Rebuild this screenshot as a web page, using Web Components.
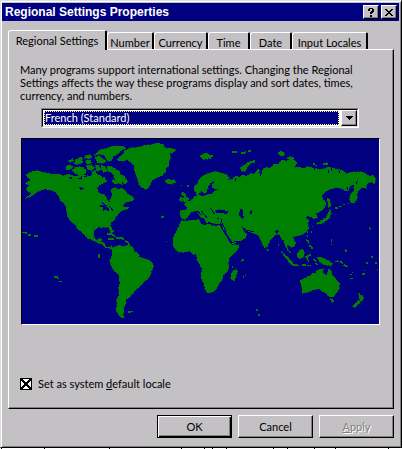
<!DOCTYPE html>
<html lang="en"><head><meta charset="utf-8"><title>Regional Settings Properties</title>
<style>
html{height:100%}
body{margin:0;min-height:100%;background:#fff;font:11px/13px Lato,"Liberation Sans",Arial,sans-serif;color:#000}
</style></head><body>
<settings-page></settings-page>
<script>
function define(name,html,setup){
  customElements.define(name,class extends HTMLElement{
    constructor(){
      super();
      const t=document.createElement('template');
      t.innerHTML='<style>*{box-sizing:border-box}:host{display:block;box-sizing:border-box}</style>'+html;
      this.attachShadow({mode:'open'}).append(t.content.cloneNode(true));
    }
    connectedCallback(){ if(setup) setup(this,this.shadowRoot); }
  });
}

define('title-bar',`<style>
:host{display:flex;align-items:center;height:18px;background:#000080;color:#fff;padding:0 2px 0 3px}
h1{flex:1;margin:0;font:bold 12px/16px "Liberation Sans",Arial,sans-serif}
div{display:flex;gap:2px}
button{width:16px;height:14px;padding:0;border:1px solid;border-color:#fff #000 #000 #fff;background:#c3c1c3;box-shadow:inset -1px -1px #808080;display:grid;place-items:center}
svg{display:block}
</style><h1><slot></slot></h1><div>
<button aria-label="Help"><svg width="8" height="10" shape-rendering="crispEdges"><path d="M2 1h4v1h1v3h-1v1h-1v1h-2v-2h1v-1h1v-2h-2v2h-2v-2h1zM3 8h2v2h-2z"/></svg></button>
<button aria-label="Close"><svg width="8" height="8" shape-rendering="crispEdges"><path d="M0 1h2v1h1v1h2v-1h1v-1h2v1h-1v1h-1v1h-1v1h1v1h1v1h1v1h-2v-1h-1v-1h-2v1h-1v1h-2v-1h1v-1h1v-1h1v-1h-1v-1h-1v-1h-1z"/></svg></button></div>`);

define('tab-item',`<style>
:host{flex:0 1 auto;min-width:0;position:relative;margin-top:2px;height:17px}
button{width:100%;height:100%;font:inherit;color:inherit;background:#c3c1c3;border:1px solid #fff;border-right:2px solid #000;border-bottom:0;border-radius:3px 2px 0 0;padding:2px 0 0;white-space:nowrap;display:block}
:host([selected]){margin-top:0;height:20px;z-index:1}
:host([selected]) button{padding-bottom:3px}
</style><button role="tab"><slot></slot></button>`,(h,r)=>{
 r.querySelector('button').setAttribute('aria-selected',h.hasAttribute('selected'));
 h.style.flexBasis=h.getAttribute('basis');
});

define('tab-strip',`<style>:host{display:flex;height:19px}</style><slot></slot>`);

define('locale-select',`<style>
:host{display:grid;grid-template-columns:1fr;height:20px;border:1px solid;border-color:#808080 #fff #fff #808080;background:#fff}
.in{position:relative;border:1px solid;border-color:#000 #dfdfdf #dfdfdf #000;display:flex;padding:1px}
select{appearance:none;width:100%;height:14px;min-width:0;margin-right:17px;padding:0;border:1px dotted #ffff7f;background:#000080;color:#fff;font:inherit;line-height:12px;border-radius:0;outline:0}
.arrow{position:absolute;right:0;top:0;bottom:0;width:16px;background:#c3c1c3;border:1px solid;border-color:#fff #000 #000 #fff;box-shadow:inset -1px -1px #808080;display:grid;place-items:center;pointer-events:none}
</style><div class="in"><select aria-label="Locale"><option>French (Standard)</option></select><span class="arrow"><svg width="7" height="4" shape-rendering="crispEdges"><path d="M0 0h7v1h-1v1h-1v1h-1v1h-1v-1h-1v-1h-1v-1h-1z"/></svg></span></div>`);

define('world-map',`<style>
:host{border:1px solid;border-color:#000 #fff #fff #000;outline:1px solid #c3c1c3;background:#000080}
svg{display:block;width:100%;height:auto}
.land{fill:#008000;stroke:#008000;stroke-width:2;stroke-dasharray:5 8 3 6 9 5}
.water{fill:#000080}
.isles{fill:none;stroke:#008000;stroke-width:5}
.inlets{fill:none;stroke:#000080;stroke-width:3}
</style><svg viewBox="21 15 1071 555" shape-rendering="crispEdges" role="img" aria-label="World map">
<g class="land">
<path d="M32 125L40 118 48 113 70 110 80 115 95 116 112 121 130 120 145 125 160 120 180 126 197 122 215 125 228 127 233 112 240 108 246 120 255 125 270 130 275 143 262 150 247 158 248 172 258 180 270 182 278 199 284 204 286 195 292 184 288 166 300 160 312 166 318 162 329 168 338 180 355 190 357 198 345 203 334 204 323 212 327 219 341 220 340 226 327 227 315 235 311 241 301 248 299 257 289 265 286 275 293 290 292 299 286 294 280 281 270 279 261 281 250 280 239 288 235 299 238 311 244 320 253 313 262 315 259 323 268 328 273 338 285 339 290 335 290 344 281 343 271 341 260 330 247 326 233 319 217 312 205 300 198 292 188 285 180 272 162 258 155 236 153 217 147 208 135 199 132 187 121 174 108 168 90 166 78 169 65 175 57 181 45 189 29 193 43 184 49 176 37 172 35 161 45 153 31 150 36 143 45 141 43 134Z"/>
<path d="M236 64L255 48 278 42 292 36 325 36 333 43 320 49 308 61 295 66 292 77 282 83 274 75 266 64 252 60Z"/>
<path d="M276 96L291 98 303 106 312 112 318 122 329 127 338 143 331 151 322 145 322 155 312 148 299 150 290 140 300 136 295 123 286 112 279 115Z"/>
<path d="M178 101L200 98 214 108 211 120 197 124 180 119 172 109ZM154 97L166 92 174 98 167 106 154 109ZM215 94L229 92 239 101 230 110 218 106ZM160 80L172 74 178 79 164 86ZM181 77L200 69 204 86 188 92 178 87ZM210 65L224 61 232 70 222 75 208 72ZM212 79L226 77 229 88 213 90ZM239 70L253 64 261 74 273 79 270 88 247 86ZM241 94L252 92 256 107 246 112ZM258 93L269 97 276 110 266 117 258 106Z"/>
<path d="M305 79L315 67 324 61 330 49 345 42 365 41 390 34 410 32 430 27 444 31 453 44 466 42 482 47 476 55 465 59 467 72 461 83 463 95 452 103 452 115 440 126 424 131 412 139 406 150 397 167 389 165 379 160 371 148 367 133 362 120 357 106 359 95 349 87 338 78 320 81Z"/>
<path d="M450 141L460 135 470 139 478 136 482 144 471 151 456 148Z"/>
<path d="M289 343L304 336 312 333 322 338 339 334 352 339 359 351 370 359 374 369 390 374 403 379 415 390 416 399 409 411 407 423 400 434 389 440 381 451 373 460 362 466 355 479 345 488 333 497 334 507 325 522 327 533 323 541 329 552 319 551 311 543 303 528 306 510 305 498 312 482 311 464 314 448 312 423 299 413 289 395 284 380 291 367 292 353Z"/>
<path d="M496 230L512 228 517 220 508 212 515 205 528 199 536 190 545 185 544 176 550 169 552 184 565 187 579 181 592 179 600 171 613 165 596 166 590 154 600 140 589 145 579 158 580 170 570 179 560 172 553 177 537 172 537 157 547 151 550 140 564 126 581 118 598 112 616 116 633 121 645 132 636 139 653 136 659 127 676 128 683 122 693 126 708 119 717 121 724 111 731 103 735 128 741 119 743 106 755 100 768 102 775 91 792 90 800 78 815 80 829 75 838 78 847 86 837 101 850 98 866 103 879 98 893 101 914 107 929 104 937 99 955 102 971 106 986 112 994 119 1014 114 1033 113 1045 115 1054 121 1064 126 1075 124 1082 135 1079 150 1069 144 1055 150 1054 164 1042 160 1033 167 1026 178 1027 194 1018 207 1007 206 1003 196 1008 179 1018 169 1015 151 1005 156 1001 169 991 171 980 164 963 160 947 166 934 171 920 184 923 195 933 205 930 219 920 230 909 236 902 239 908 251 897 255 888 249 877 246 870 252 884 258 879 268 881 283 872 295 858 303 845 306 834 308 838 319 843 329 835 339 827 340 819 332 815 336 821 349 829 358 821 353 810 334 806 319 798 314 794 302 786 300 777 306 768 315 763 323 757 339 750 343 744 334 736 318 730 304 723 300 710 296 695 291 682 284 690 296 696 300 691 313 677 320 653 330 645 316 636 302 625 285 621 270 609 266 596 269 583 264 574 267 569 254 555 247 548 235 562 247 575 257 564 247 550 229 541 231 530 234 520 247 508 258 497 251Z"/>
<path d="M498 260L514 261 533 259 552 256 557 269 568 274 580 270 595 276 615 274 622 290 635 309 641 322 650 332 673 332 672 340 664 352 650 365 642 374 640 389 642 403 635 415 624 425 622 438 612 449 608 460 595 474 577 477 570 465 566 448 559 433 558 420 562 406 554 390 545 377 546 362 534 360 523 351 508 354 489 354 480 344 474 332 475 309 482 295 491 278Z"/>
<path d="M648 434L647 423 653 412 664 405 668 412 663 430 657 442Z"/>
<path d="M855 440L873 430 887 425 892 417 901 419 904 411 916 404 927 405 922 416 935 424 941 405 949 410 953 424 964 436 974 449 972 465 964 477 958 488 944 488 936 482 928 474 919 472 911 466 898 467 888 471 873 476 861 479 861 463Z"/>
<path d="M944 494L955 495 957 503 950 505ZM1031 478L1038 483 1047 489 1043 498 1036 502 1033 492ZM1032 498L1036 505 1026 515 1017 522 1012 516 1021 507Z"/>
<path d="M846 360L854 348 861 344 868 351 867 361 862 373 851 374 846 367ZM905 369L917 369 929 374 943 382 954 388 949 395 937 394 926 391 914 384Z"/>
<path d="M798 352L807 358 818 369 828 380 837 391 853 393 850 397 832 394 822 385 813 373Z"/>
<path d="M555 66L571 56 587 65 578 75 564 76ZM789 58L797 51 808 56 808 66 796 65ZM815 73L827 66 838 73 829 81ZM675 103L685 94 699 85 720 78 721 84 705 90 696 102 689 113 680 111Z"/>
<path d="M506 204L504 195 507 187 499 181 503 174 511 179 513 188 522 194 518 204ZM491 198L498 188 503 194 500 203Z"/>
<path d="M905 266L916 264 923 256 934 251 938 239 944 226 949 237 944 251 935 259 921 269 906 271ZM937 192L944 195 948 216 941 222 938 208Z"/>
</g>
<g class="water">
<path d="M599 231L612 226 621 229 636 230 642 238 630 239 617 236 605 239ZM675 226L686 227 683 239 687 251 681 255 672 244ZM706 230L711 229 711 240 704 241ZM577 166L589 160 604 166 590 169 584 177 573 180ZM779 291L789 287 791 294 785 301Z"/>
<path d="M257 211L270 214 284 225 281 232 271 227 265 232 263 220 255 219ZM162 131L171 128 169 138ZM190 158L208 162 198 170Z"/>
</g>
<path class="inlets" d="M160 118L190 125M190 132h9v-5M207 128h8M270 131L284 141 294 153 306 155M283 216L294 231M260 205L275 216M586 221L598 240M560 231L577 253M606 253L620 258 618 268M622 268L634 295M627 289L651 325 675 321M682 281L697 290 718 293M735 103v24M660 131v10M878 250L886 262M1022 151l7-11M948 103v8M898 94v15M940 108v10M970 107l5 9M998 158v10M910 465l13 10M262 120v12M199 94l17 9"/>
<path class="isles" d="M22 295h8l6 4M40 302h9M56 305h12M116 429h10l4 5M133 442h7M252 361v12M277 300h12l13 8M293 289v5M280 314h18M304 312h18l4 6M330 320l12 7M341 329v8M340 534h7M349 532h6M438 248h8M454 320v5M498 154h3M519 154v4M560 243v8M578 255h10M604 267h12M613 257h5M650 398h4M678 382l6-4v-4M683 429h3M690 424h3M723 528h5M731 541v6M755 345l4 6M652 53h14M678 57h10l5-5M698 50h10M580 65h14M581 72h8M925 90h13M934 85v5M895 89h6M900 94h5M960 221h8M972 217h8M985 211h6M998 208h5M875 293h4M877 304v6M873 316l7 6v8M883 334l7 6v6M790 330v7M860 392h12M875 394h14M878 376l-4-8 13-6M876 376l7 7M895 375l8 8M901 386l5 7M962 384l8-4M976 383l9 6M986 392l12 6M990 346l5 8M1008 420v4M1006 433h8M1010 415h4M1042 420h8M1048 408v3M1054 385l5 4M1070 366v6M1082 383v8M1087 406v3M1062 281l6 4M949 315v10M949 330v4M918 258l3 9M892 276v4M889 292v5"/>
</svg>`);

define('check-option',`<style>
label{display:flex;align-items:center;gap:6px;width:max-content}
input{appearance:none;width:12px;height:12px;margin:0;border:1px solid;border-color:#606060 #fff #fff #606060;background:#fff}
input:checked{background:linear-gradient(45deg,transparent 44%,#000 44% 56%,transparent 56%),linear-gradient(135deg,#fff 44%,#000 44% 56%,#fff 56%);border-color:#000}
</style><label><input type="checkbox" checked><span><slot></slot></span></label>`);

define('push-button',`<style>
:host{flex:0 1 75px;height:23px}
button{width:100%;height:100%;padding:0;font:inherit;color:#000;background:#c3c1c3;border:1px solid;border-color:#fff #000 #000 #fff;box-shadow:inset -1px -1px #808080}
:host([default]) button{border:1px solid #000;box-shadow:inset 1px 1px #fff,inset -1px -1px #000,inset -2px -2px #808080}
button:disabled{color:#808080;text-shadow:1px 1px #fff}
</style><button><slot></slot></button>`,(h,r)=>{ r.querySelector('button').disabled=h.hasAttribute('disabled'); });

define('settings-page',`<style>
.window{background:#c3c1c3;border:1px solid;border-color:#dfdfdf #000 #000 #dfdfdf;box-shadow:inset 1px 1px #fff,inset -1px -1px #808080;padding:2px 2px 9px 1px;margin-right:1px}
.content{padding:9px 5px 0 6px}
.panel{border:1px solid;border-color:#fff #000 #000 #fff;box-shadow:inset -1px -1px #808080;padding:13px 13px 18px 11px}
p{margin:0;padding-right:12px}
locale-select{margin:6px 21px 10px 21px}
world-map{margin:0 0 0 1px}
check-option{margin-top:52px}
.buttons{display:flex;justify-content:flex-end;gap:6px;margin-top:6px}
.edge{display:block;width:100%;height:1px}
</style><main class="window"><title-bar>Regional Settings Properties</title-bar>
<div class="content"><tab-strip role="tablist">
<tab-item selected basis="99px">Regional Settings</tab-item><tab-item basis="47px">Number</tab-item><tab-item basis="54px">Currency</tab-item><tab-item basis="42px">Time</tab-item><tab-item basis="42px">Date</tab-item><tab-item basis="76px">Input Locales</tab-item></tab-strip>
<section class="panel" role="tabpanel"><p>Many programs support international settings. Changing the Regional Settings affects the way these programs display and sort dates, times, currency, and numbers.</p>
<locale-select></locale-select><world-map></world-map>
<check-option>Set as system <u>d</u>efault locale</check-option></section>
<div class="buttons"><push-button default>OK</push-button><push-button>Cancel</push-button><push-button disabled><u>A</u>pply</push-button></div></div></main>
<svg class="edge" viewBox="0 0 403 1" preserveAspectRatio="none" shape-rendering="crispEdges" aria-hidden="true"><path d="M1 0h1v1h-1zM44 0h1v1h-1zM109 0h1v1h-1zM181 0h1v1h-1zM204 0h1v1h-1zM212 0h1v1h-1zM226 0h1v1h-1zM273 0h1v1h-1zM287 0h1v1h-1zM314 0h1v1h-1zM335 0h1v1h-1zM388 0h1v1h-1z"/></svg>`);
</script></body></html>
